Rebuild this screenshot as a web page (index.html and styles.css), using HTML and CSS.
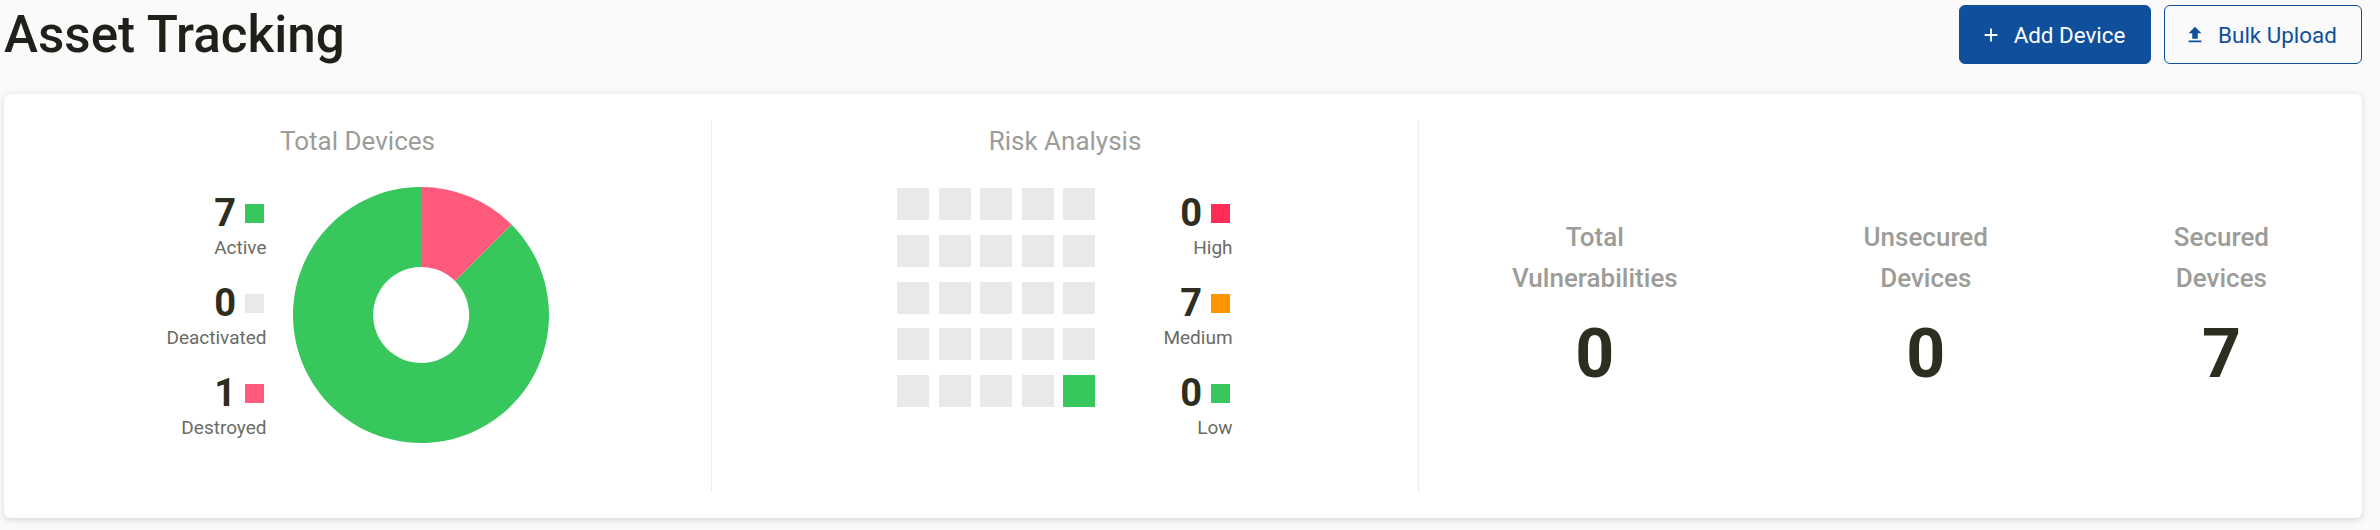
FILE: index.html
```html
<!DOCTYPE html>
<html lang="en">
<head>
<meta charset="utf-8">
<title>Asset Tracking</title>
<link rel="stylesheet" href="styles.css">
</head>
<body>
<header class="page-header">
  <h1 class="page-title">Asset Tracking</h1>
  <div class="actions">
    <button class="btn btn-primary" type="button">
      <svg class="btn-icon" viewBox="0 0 24 24" aria-hidden="true"><path d="M19 13h-6v6h-2v-6H5v-2h6V5h2v6h6v2z"/></svg>
      <span>Add Device</span>
    </button>
    <button class="btn btn-outline" type="button">
      <svg class="btn-icon" viewBox="0 0 24 24" aria-hidden="true"><path d="M9 16h6v-6h4l-7-7-7 7h4zm-4 2h14v2H5z"/></svg>
      <span>Bulk Upload</span>
    </button>
  </div>
</header>
<main class="card">
  <section class="panel panel-divided">
    <h2 class="panel-title">Total Devices</h2>
    <div class="chart-row chart-row-devices">
      <ul class="legend">
        <li class="legend-item"><div class="legend-value"><span>7</span><i class="swatch green"></i></div><div class="legend-label">Active</div></li>
        <li class="legend-item"><div class="legend-value"><span>0</span><i class="swatch grey"></i></div><div class="legend-label">Deactivated</div></li>
        <li class="legend-item"><div class="legend-value"><span>1</span><i class="swatch pink"></i></div><div class="legend-label">Destroyed</div></li>
      </ul>
      <svg class="donut" viewBox="0 0 256 256" aria-hidden="true">
        <path class="donut-green" d="M128 0A128 128 0 1 0 218.5 37.5L162 94A48 48 0 1 1 128 80Z"/>
        <path class="donut-pink" d="M128 0A128 128 0 0 1 218.5 37.5L162 94A48 48 0 0 0 128 80Z"/>
      </svg>
    </div>
  </section>
  <section class="panel panel-divided">
    <h2 class="panel-title">Risk Analysis</h2>
    <div class="chart-row chart-row-risk">
      <div class="matrix">
        <i></i><i></i><i></i><i></i><i></i>
        <i></i><i></i><i></i><i></i><i></i>
        <i></i><i></i><i></i><i></i><i></i>
        <i></i><i></i><i></i><i></i><i></i>
        <i></i><i></i><i></i><i></i><i class="green"></i>
      </div>
      <ul class="legend">
        <li class="legend-item"><div class="legend-value"><span>0</span><i class="swatch red"></i></div><div class="legend-label">High</div></li>
        <li class="legend-item"><div class="legend-value"><span>7</span><i class="swatch orange"></i></div><div class="legend-label">Medium</div></li>
        <li class="legend-item"><div class="legend-value"><span>0</span><i class="swatch green"></i></div><div class="legend-label">Low</div></li>
      </ul>
    </div>
  </section>
  <section class="panel stats">
    <div class="stat"><div class="stat-label">Total<br>Vulnerabilities</div><div class="stat-value">0</div></div>
    <div class="stat"><div class="stat-label">Unsecured<br>Devices</div><div class="stat-value">0</div></div>
    <div class="stat"><div class="stat-label">Secured<br>Devices</div><div class="stat-value">7</div></div>
  </section>
</main>
</body>
</html>
```
FILE: styles.css
```css
* { box-sizing: border-box; }
html, body { margin: 0; padding: 0; }
body {
  height: 530px;
  overflow: hidden;
  background: #fafafb;
  font-family: Roboto, "Liberation Sans", sans-serif;
  color: #1f201a;
}
.page-header {
  display: flex;
  justify-content: space-between;
  align-items: flex-start;
  padding: 5px 18px 0 4px;
}
.page-title {
  margin: 0;
  font-size: 51.2px;
  font-weight: 500;
  line-height: 59px;
}
.actions { display: flex; gap: 13px; }
.btn {
  display: flex;
  align-items: center;
  justify-content: center;
  gap: 12px;
  height: 59px;
  padding: 0 5px 0 0;
  border-radius: 6px;
  font-family: inherit;
  font-size: 22.4px;
  font-weight: 400;
  border: 1.5px solid #0f4f9c;
  cursor: pointer;
}
.btn-icon { width: 22px; height: 22px; fill: currentColor; flex: none; }
.btn-primary { width: 192px; background: #0f4f9c; color: #fff; }
.btn-outline { width: 198px; background: #fafafb; color: #0f4f9c; }
.card {
  display: grid;
  grid-template-columns: 708px 707px 1fr;
  height: 424px;
  margin: 30px 18px 0 4px;
  padding: 26px 0;
  background: #fff;
  border-radius: 6px;
  box-shadow: 0 1.5px 6px rgba(0, 0, 0, 0.14);
}
.panel { min-width: 0; }
.panel-divided { border-right: 1.5px solid #ececea; }
.panel-title {
  margin: 0;
  height: 66.5px;
  padding-top: 3px;
  font-size: 26px;
  font-weight: 400;
  line-height: 36px;
  text-align: center;
  color: #9c9c98;
}
.chart-row { display: flex; justify-content: center; align-items: flex-start; }
.chart-row-devices { gap: 26px; }
.chart-row-risk { gap: 68px; }
.legend {
  display: flex;
  flex-direction: column;
  gap: 24px;
  margin: 8px 0 0;
  padding: 0;
  list-style: none;
}
.legend-item { text-align: right; }
.legend-value {
  display: flex;
  justify-content: flex-end;
  align-items: center;
  gap: 8.5px;
  padding-right: 2.5px;
  height: 36px;
  font-size: 38px;
  font-weight: 700;
  line-height: 36px;
  color: #2d2e20;
}
.legend-label {
  margin-top: 3px;
  font-size: 19px;
  line-height: 27px;
  color: #6b6b64;
}
.swatch { display: block; width: 19.5px; height: 19.5px; margin-top: 2px; }
.green { background: #37c75c; }
.grey { background: #e9e9e7; }
.pink { background: #ff5a7c; }
.red { background: #ff2d55; }
.orange { background: #ff9500; }
.donut { width: 256px; height: 256px; flex: none; display: block; }
.donut-green { fill: #37c75c; }
.donut-pink { fill: #ff5a7c; }
.matrix {
  display: grid;
  grid-template-columns: repeat(5, 32px);
  grid-auto-rows: 32px;
  gap: 14.75px 9.5px;
  margin-top: 1.5px;
}
.matrix i { display: block; background: #e9e9e7; }
.matrix i.green { background: #37c75c; }
.stats {
  display: flex;
  justify-content: space-around;
  align-items: flex-start;
  padding-top: 97px;
}
.stat { text-align: center; }
.stat-label {
  font-size: 26px;
  font-weight: 500;
  line-height: 41px;
  color: #9c9c98;
}
.stat-value {
  margin-top: 15px;
  font-size: 68px;
  font-weight: 700;
  line-height: 80px;
  color: #2d2e20;
}
```
